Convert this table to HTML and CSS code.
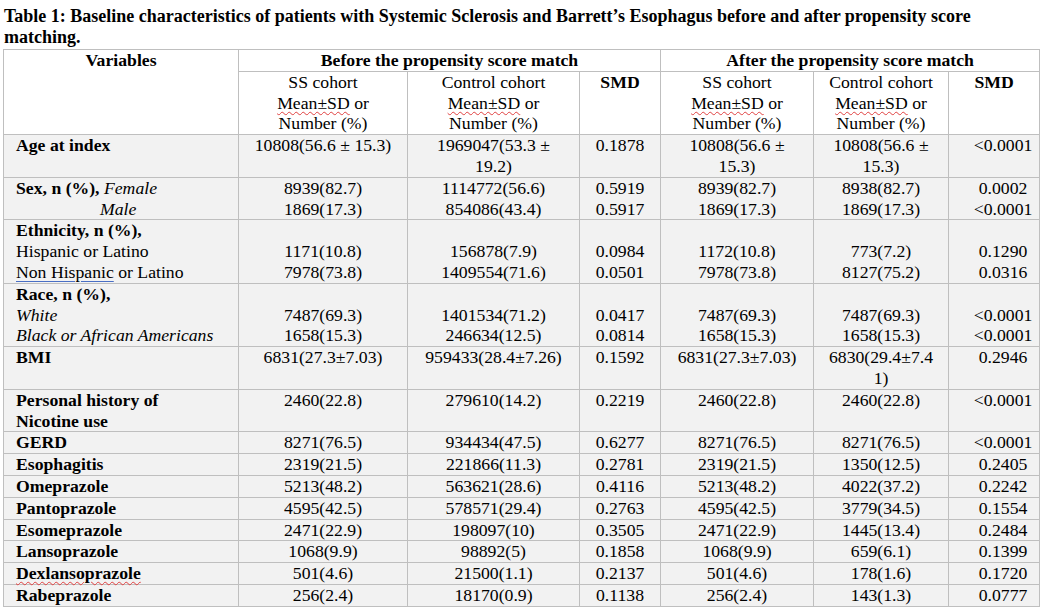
FILE: index.html
```html
<!DOCTYPE html>
<html>
<head>
<meta charset="utf-8">
<link rel="stylesheet" href="styles.css">
</head>
<body>
<div class="page">
  <p class="title">Table 1: Baseline characteristics of patients with Systemic Sclerosis and Barrett’s Esophagus before and after propensity score<br>matching.</p>
  <table class="tbl">
    <colgroup>
      <col class="c0"><col class="c1"><col class="c2"><col class="c3"><col class="c4"><col class="c5"><col class="c6">
    </colgroup>
    <thead>
      <tr class="h1">
        <th rowspan="2" class="var">Variables</th>
        <th colspan="3">Before the propensity score match</th>
        <th colspan="3">After the propensity score match</th>
      </tr>
      <tr class="h2">
        <td>SS cohort<br><span class="sp">Mean±SD</span> or<br>Number (%)</td>
        <td>Control cohort<br><span class="sp">Mean±SD</span> or<br>Number (%)</td>
        <th>SMD</th>
        <td>SS cohort<br><span class="sp">Mean±SD</span> or<br>Number (%)</td>
        <td>Control cohort<br><span class="sp">Mean±SD</span> or<br>Number (%)</td>
        <th>SMD</th>
      </tr>
    </thead>
    <tbody>
      <tr>
        <td class="lbl"><b>Age at index</b></td>
        <td>10808(56.6 ± 15.3)</td>
        <td>1969047(53.3 ±<br>19.2)</td>
        <td>0.1878</td>
        <td>10808(56.6 ±<br>15.3)</td>
        <td>10808(56.6 ±<br>15.3)</td>
        <td class="smd">&lt;0.0001</td>
      </tr>
      <tr>
        <td class="lbl"><b>Sex, n (%),</b> <i>Female</i><br><i class="male">Male</i></td>
        <td>8939(82.7)<br>1869(17.3)</td>
        <td>1114772(56.6)<br>854086(43.4)</td>
        <td>0.5919<br>0.5917</td>
        <td>8939(82.7)<br>1869(17.3)</td>
        <td>8938(82.7)<br>1869(17.3)</td>
        <td class="smd">0.0002<br>&lt;0.0001</td>
      </tr>
      <tr>
        <td class="lbl"><b>Ethnicity, n (%),</b><br>Hispanic or Latino<br><span class="gr">Non Hispanic</span> or Latino</td>
        <td><br>1171(10.8)<br>7978(73.8)</td>
        <td><br>156878(7.9)<br>1409554(71.6)</td>
        <td><br>0.0984<br>0.0501</td>
        <td><br>1172(10.8)<br>7978(73.8)</td>
        <td><br>773(7.2)<br>8127(75.2)</td>
        <td class="smd"><br>0.1290<br>0.0316</td>
      </tr>
      <tr>
        <td class="lbl"><b>Race, n (%),</b><br><i>White</i><br><i>Black or African Americans</i></td>
        <td><br>7487(69.3)<br>1658(15.3)</td>
        <td><br>1401534(71.2)<br>246634(12.5)</td>
        <td><br>0.0417<br>0.0814</td>
        <td><br>7487(69.3)<br>1658(15.3)</td>
        <td><br>7487(69.3)<br>1658(15.3)</td>
        <td class="smd"><br>&lt;0.0001<br>&lt;0.0001</td>
      </tr>
      <tr>
        <td class="lbl"><b>BMI</b></td>
        <td>6831(27.3±7.03)</td>
        <td>959433(28.4±7.26)</td>
        <td>0.1592</td>
        <td>6831(27.3±7.03)</td>
        <td>6830(29.4±7.4<br>1)</td>
        <td class="smd">0.2946</td>
      </tr>
      <tr>
        <td class="lbl"><b>Personal history of<br>Nicotine use</b></td>
        <td>2460(22.8)</td>
        <td>279610(14.2)</td>
        <td>0.2219</td>
        <td>2460(22.8)</td>
        <td>2460(22.8)</td>
        <td class="smd">&lt;0.0001</td>
      </tr>
      <tr>
        <td class="lbl"><b>GERD</b></td>
        <td>8271(76.5)</td>
        <td>934434(47.5)</td>
        <td>0.6277</td>
        <td>8271(76.5)</td>
        <td>8271(76.5)</td>
        <td class="smd">&lt;0.0001</td>
      </tr>
      <tr>
        <td class="lbl"><b>Esophagitis</b></td>
        <td>2319(21.5)</td>
        <td>221866(11.3)</td>
        <td>0.2781</td>
        <td>2319(21.5)</td>
        <td>1350(12.5)</td>
        <td class="smd">0.2405</td>
      </tr>
      <tr>
        <td class="lbl"><b>Omeprazole</b></td>
        <td>5213(48.2)</td>
        <td>563621(28.6)</td>
        <td>0.4116</td>
        <td>5213(48.2)</td>
        <td>4022(37.2)</td>
        <td class="smd">0.2242</td>
      </tr>
      <tr>
        <td class="lbl"><b>Pantoprazole</b></td>
        <td>4595(42.5)</td>
        <td>578571(29.4)</td>
        <td>0.2763</td>
        <td>4595(42.5)</td>
        <td>3779(34.5)</td>
        <td class="smd">0.1554</td>
      </tr>
      <tr>
        <td class="lbl"><b>Esomeprazole</b></td>
        <td>2471(22.9)</td>
        <td>198097(10)</td>
        <td>0.3505</td>
        <td>2471(22.9)</td>
        <td>1445(13.4)</td>
        <td class="smd">0.2484</td>
      </tr>
      <tr>
        <td class="lbl"><b>Lansoprazole</b></td>
        <td>1068(9.9)</td>
        <td>98892(5)</td>
        <td>0.1858</td>
        <td>1068(9.9)</td>
        <td>659(6.1)</td>
        <td class="smd">0.1399</td>
      </tr>
      <tr>
        <td class="lbl"><b class="sp">Dexlansoprazole</b></td>
        <td>501(4.6)</td>
        <td>21500(1.1)</td>
        <td>0.2137</td>
        <td>501(4.6)</td>
        <td>178(1.6)</td>
        <td class="smd">0.1720</td>
      </tr>
      <tr>
        <td class="lbl"><b>Rabeprazole</b></td>
        <td>256(2.4)</td>
        <td>18170(0.9)</td>
        <td>0.1138</td>
        <td>256(2.4)</td>
        <td>143(1.3)</td>
        <td class="smd">0.0777</td>
      </tr>
    </tbody>
  </table>
</div>
</body>
</html>
```
FILE: styles.css
```css
html, body {
  margin: 0;
  padding: 0;
  background: #ffffff;
}
.page {
  padding: 6px 0 0 3px;
  font-family: "Liberation Serif", "Times New Roman", serif;
  font-size: 17.7px;
  color: #000;
}
.title {
  margin: 0 0 1px 1px;
  font-size: 18px;
  font-weight: bold;
  line-height: 21px;
}
.tbl {
  border-collapse: collapse;
  table-layout: fixed;
  width: 1036px;
  line-height: 20.8px;
}
.c0 { width: 235px; }
.c1 { width: 169px; }
.c2 { width: 172px; }
.c3 { width: 81px; }
.c4 { width: 153px; }
.c5 { width: 135px; }
.c6 { width: 91px; }
.tbl th, .tbl td {
  border: 1px solid #bfbfbf;
  padding: 0 2px;
  text-align: center;
  vertical-align: top;
  white-space: nowrap;
  overflow: visible;
}
.tbl th {
  font-weight: bold;
}
.tbl thead th, .tbl thead td {
  background: #ffffff;
}
.tbl tbody td {
  background: #f2f2f2;
}
.tbl td.lbl {
  text-align: left;
  padding-left: 12px;
}
.tbl td.smd {
  padding-left: 20px;
}
.male {
  display: inline-block;
  margin-left: 84px;
}
.sp {
  text-decoration: underline wavy #e04040;
  text-decoration-thickness: 1px;
  text-underline-offset: 2px;
}
.gr {
  text-decoration: underline #4a6fc4;
  text-decoration-thickness: 1px;
  text-underline-offset: 3px;
}
```
